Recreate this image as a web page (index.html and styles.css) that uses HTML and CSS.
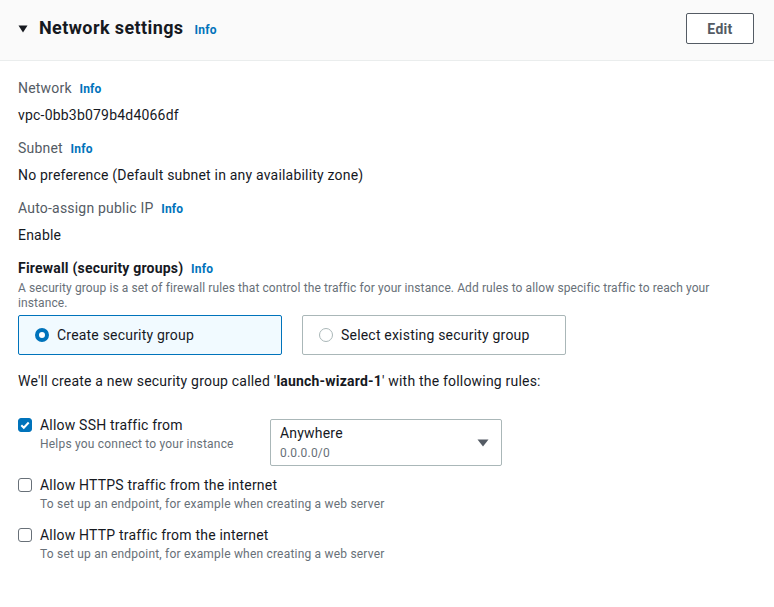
FILE: index.html
```html
<!DOCTYPE html>
<html lang="en">
<head>
<meta charset="utf-8">
<title>Network settings</title>
<link rel="stylesheet" href="styles.css">
</head>
<body>
<section class="panel">
  <header class="panel-header">
    <div class="title">
      <svg class="caret" width="10" height="8" viewBox="0 0 10 8"><path d="M0.5 0.5h9L5 7.5z" fill="#16191f"/></svg>
      <h2>Network settings</h2>
      <a class="info">Info</a>
    </div>
    <button class="btn">Edit</button>
  </header>
  <div class="panel-body">
    <div class="field">
      <div class="label">Network <a class="info">Info</a></div>
      <div class="value">vpc-0bb3b079b4d4066df</div>
    </div>
    <div class="field">
      <div class="label">Subnet <a class="info">Info</a></div>
      <div class="value">No preference (Default subnet in any availability zone)</div>
    </div>
    <div class="field">
      <div class="label">Auto-assign public IP <a class="info">Info</a></div>
      <div class="value">Enable</div>
    </div>
    <div class="firewall">
      <div class="label strong">Firewall (security groups) <a class="info">Info</a></div>
      <p class="desc">A security group is a set of firewall rules that control the traffic for your instance. Add rules to allow specific traffic to reach your instance.</p>
      <div class="tiles">
        <div class="tile selected"><span class="radio on"></span>Create security group</div>
        <div class="tile"><span class="radio"></span>Select existing security group</div>
      </div>
    </div>
    <p class="note">We'll create a new security group called '<b>launch-wizard-1</b>' with the following rules:</p>
    <div class="rules">
      <div class="rule first">
        <div class="check-col">
          <span class="checkbox on"><svg width="14" height="14" viewBox="0 0 14 14"><path d="M3.3 7.2l2.5 2.5 4.9-5.2" fill="none" stroke="#fff" stroke-width="2"/></svg></span>
          <div>
            <div class="rule-label">Allow SSH traffic from</div>
            <div class="rule-desc">Helps you connect to your instance</div>
          </div>
        </div>
        <div class="select">
          <div>
            <div class="select-main">Anywhere</div>
            <div class="select-sub">0.0.0.0/0</div>
          </div>
          <svg width="12" height="8" viewBox="0 0 12 8"><path d="M0.5 0.5h11L6 7.5z" fill="#545b64"/></svg>
        </div>
      </div>
      <div class="rule second">
        <div class="check-col">
          <span class="checkbox"></span>
          <div>
            <div class="rule-label">Allow HTTPS traffic from the internet</div>
            <div class="rule-desc">To set up an endpoint, for example when creating a web server</div>
          </div>
        </div>
      </div>
      <div class="rule third">
        <div class="check-col">
          <span class="checkbox"></span>
          <div>
            <div class="rule-label">Allow HTTP traffic from the internet</div>
            <div class="rule-desc">To set up an endpoint, for example when creating a web server</div>
          </div>
        </div>
      </div>
    </div>
  </div>
</section>
</body>
</html>
```
FILE: styles.css
```css
* { box-sizing: border-box; }
html, body { margin: 0; padding: 0; background: #fff; }
body {
  font-family: Roboto, "Liberation Sans", sans-serif;
  font-size: 14px;
  letter-spacing: 0.2px;
  color: #16191f;
}
.panel { width: 774px; }
.panel-header {
  height: 61px;
  background: #fafafa;
  border-bottom: 1px solid #eaeded;
  display: flex;
  align-items: center;
  justify-content: space-between;
  padding: 0 20px 0 18px;
}
.title { display: flex; align-items: center; margin-top: -4px; }
.caret { margin-right: 11px; margin-top: 1px; }
h2 {
  margin: 0;
  font-size: 18px;
  font-weight: 700;
  line-height: 22px;
  letter-spacing: 0.4px;
}
.info {
  color: #0073bb;
  font-weight: 700;
  font-size: 12px;
  margin-left: 4px;
  letter-spacing: 0.2px;
  text-decoration: none;
}
.title .info { margin-left: 11px; margin-top: 3px; }
.btn {
  width: 68px;
  height: 31px;
  margin-top: -3px;
  border: 1px solid #545b64;
  border-radius: 2px;
  background: #fff;
  color: #545b64;
  font-family: inherit;
  font-size: 14px;
  font-weight: 700;
  letter-spacing: 0.3px;
}
.panel-body { padding: 17px 18px 0 18px; }
.field { margin-bottom: 13px; }
.label { color: #545b64; line-height: 20px; }
.label.strong { color: #16191f; font-weight: 700; }
.value { margin-top: 6px; line-height: 20px; }
.desc {
  margin: 2px 0 0;
  font-size: 12px;
  line-height: 15px;
  letter-spacing: 0.1px;
  color: #687078;
}
.tiles {
  display: grid;
  grid-template-columns: 264px 264px;
  gap: 20px;
  margin-top: 4px;
}
.tile {
  height: 40px;
  border: 1px solid #aab7b8;
  border-radius: 2px;
  display: flex;
  align-items: center;
  padding-left: 16px;
}
.tile.selected { border-color: #0073bb; background: #f1faff; }
.radio {
  width: 14px;
  height: 14px;
  border-radius: 50%;
  border: 1px solid #aab7b8;
  background: #fff;
  margin-right: 8px;
}
.radio.on { border: 4px solid #0073bb; }
.note { margin: 16px 0 0; line-height: 20px; }
.rules { margin-top: 24px; }
.rule { display: flex; align-items: flex-start; }
.rule.second { margin-top: 9px; }
.rule.third { margin-top: 12px; }
.check-col { display: flex; min-width: 252px; }
.checkbox {
  flex: none;
  width: 14px;
  height: 14px;
  margin-top: 3px;
  margin-right: 8px;
  border: 1px solid #687078;
  border-radius: 3px;
  background: #fff;
}
.checkbox.on { background: #0073bb; border-color: #0073bb; }
.checkbox svg { display: block; margin: -1px; }
.rule-label { line-height: 20px; }
.rule-desc { font-size: 12px; line-height: 18px; color: #687078; }
.select {
  width: 232px;
  height: 47px;
  margin-top: 4px;
  border: 1px solid #aab7b8;
  border-radius: 2px;
  display: flex;
  align-items: center;
  justify-content: space-between;
  padding: 0 12px 0 9px;
}
.select-main { line-height: 20px; margin-top: -2px; }
.select-sub { font-size: 12px; line-height: 16px; color: #687078; margin-top: 2px; }
```
